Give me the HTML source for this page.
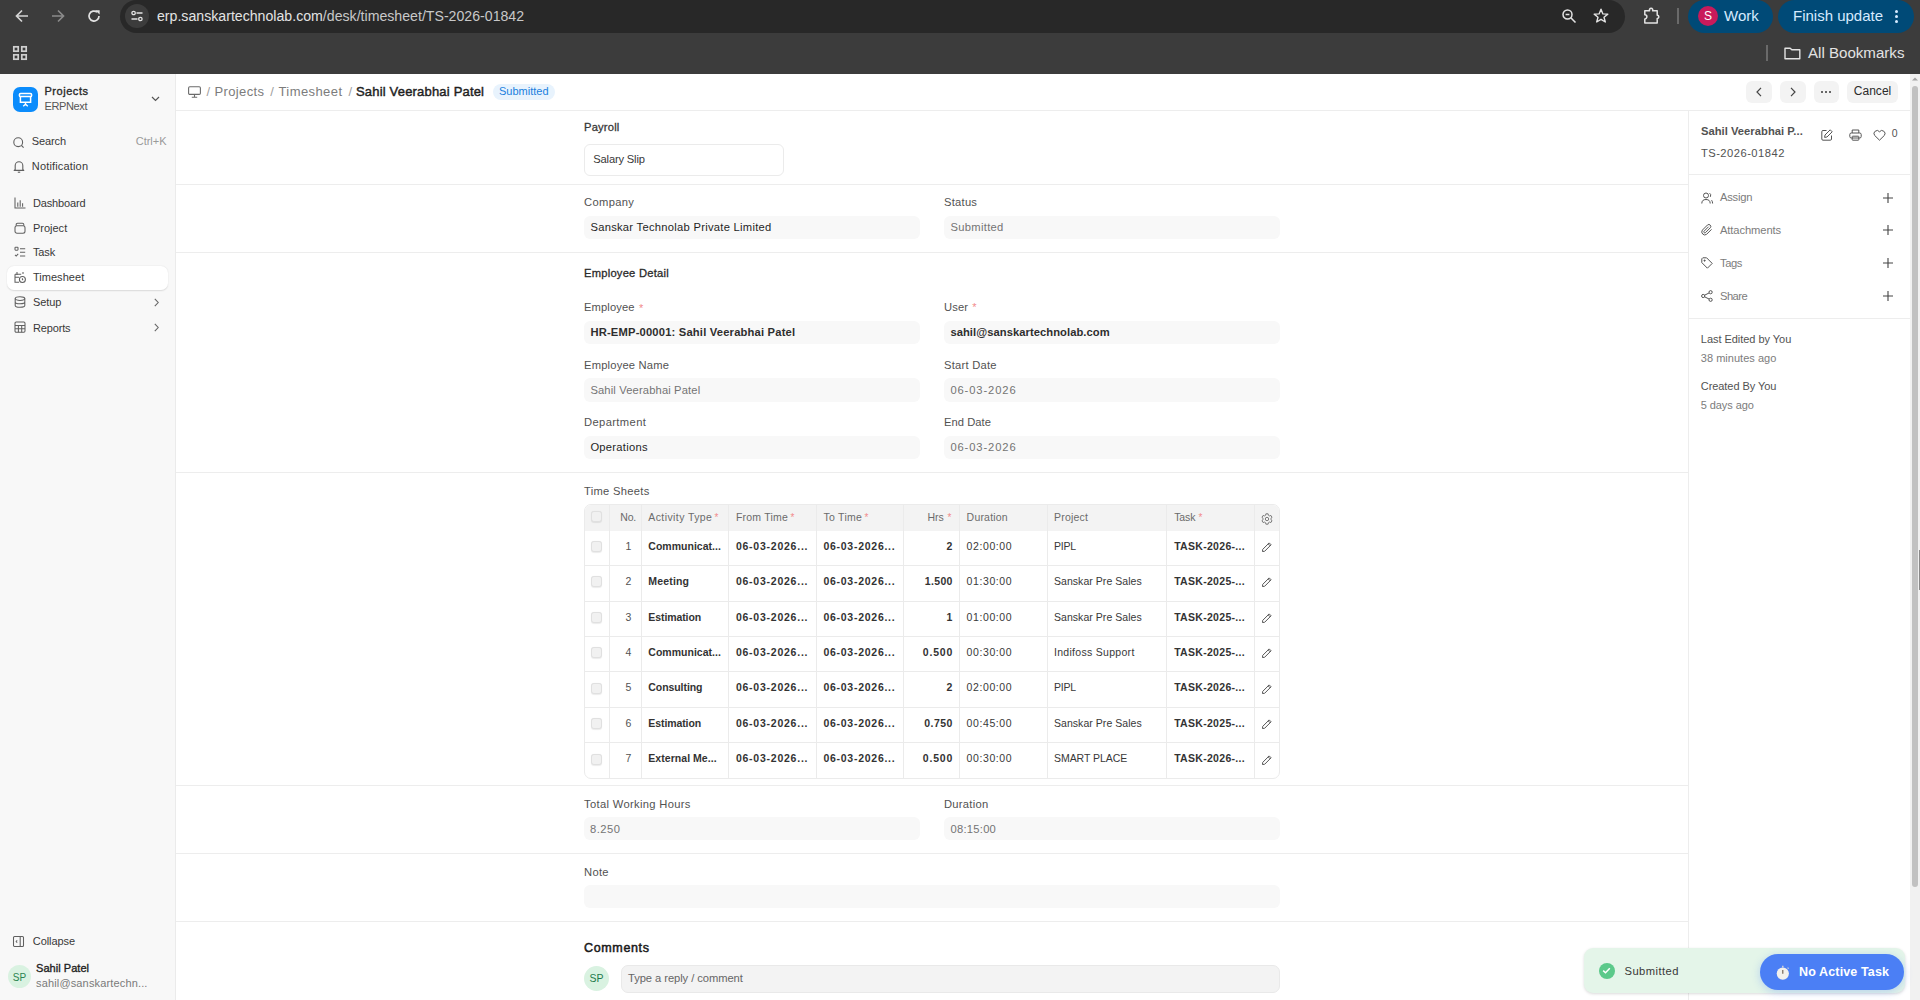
<!DOCTYPE html><html><head><meta charset="utf-8"><style>*{box-sizing:border-box;margin:0;padding:0}
html,body{width:1920px;height:1000px;overflow:hidden;background:#fff;font-family:"Liberation Sans",sans-serif;}
.a{position:absolute;white-space:nowrap}
svg{position:absolute;overflow:visible}
.bx{position:absolute}
#chrome{position:absolute;left:0;top:0;width:1920px;height:74px;background:#3c3c3c}
#omni{position:absolute;left:120px;top:0;width:1505px;height:33px;border-radius:17px;background:#282828}
#sidebar{position:absolute;left:0;top:74px;width:176px;height:926px;background:#f8f8f8;border-right:1px solid #ebebeb}
.hl{position:absolute;height:1px;background:#ededed}
.vl{position:absolute;width:1px;background:#ededed}
.inp{position:absolute;border-radius:6px;background:#f8f8f8}
</style></head><body>
<div id="chrome">
  <div id="omni"></div>
  <!-- back -->
  <svg style="left:15px;top:9px" width="14" height="14" viewBox="0 0 14 14"><path d="M13 7H2M7 1.5L1.5 7L7 12.5" fill="none" stroke="#d4d4d4" stroke-width="1.7"/></svg>
  <svg style="left:51px;top:9px" width="14" height="14" viewBox="0 0 14 14"><path d="M1 7H12M7 1.5L12.5 7L7 12.5" fill="none" stroke="#8a8a8a" stroke-width="1.7"/></svg>
  <svg style="left:87px;top:9px" width="14" height="14" viewBox="0 0 14 14"><path d="M12 7A5 5 0 1 1 10.2 3.2" fill="none" stroke="#e3e3e3" stroke-width="1.7"/><path d="M8.2 1.2H12.6V5.6Z" fill="#e3e3e3"/></svg>
  <div style="position:absolute;left:125px;top:4px;width:24px;height:24px;border-radius:12px;background:#3c3c3c"></div>
  <svg style="left:131px;top:10px" width="12" height="12" viewBox="0 0 12 12"><circle cx="2.6" cy="3" r="1.7" fill="none" stroke="#e3e3e3" stroke-width="1.3"/><path d="M5.5 3H11.5M0.5 9H6.5" stroke="#e3e3e3" stroke-width="1.4"/><circle cx="9.4" cy="9" r="1.7" fill="none" stroke="#e3e3e3" stroke-width="1.3"/></svg>
  <div class="a" style="left:157px;top:7px;font-size:14.15px;line-height:18px;color:#e3e3e3">erp.sanskartechnolab.com<span style="color:#c8c8c8">/desk/timesheet/TS-2026-01842</span></div>
  <!-- zoom -->
  <svg style="left:1562px;top:9px" width="14" height="14" viewBox="0 0 14 14"><circle cx="5.5" cy="5.5" r="4.5" fill="none" stroke="#e3e3e3" stroke-width="1.5"/><path d="M3.6 5.5H7.4" stroke="#e3e3e3" stroke-width="1.5"/><path d="M8.8 8.8L13.5 13.5" stroke="#e3e3e3" stroke-width="1.6"/></svg>
  <svg style="left:1593px;top:8px" width="16" height="15" viewBox="0 0 16 15"><path d="M8 1.2L9.9 5.9L14.8 6.1L11 9.2L12.3 14L8 11.3L3.7 14L5 9.2L1.2 6.1L6.1 5.9Z" fill="none" stroke="#e3e3e3" stroke-width="1.4" stroke-linejoin="round"/></svg>
  <!-- puzzle -->
  <svg style="left:1643px;top:6px" width="18" height="18" viewBox="0 0 18 18"><path d="M1.8 4.8H6.6A1.7 1.7 0 1 1 9.6 4.8H14.2V9.2A1.6 1.6 0 1 1 14.2 12.4V17H1.8V12.9A2.1 2.1 0 0 0 1.8 8.7Z" fill="none" stroke="#e3e3e3" stroke-width="1.5" stroke-linejoin="round"/></svg>
  <div style="position:absolute;left:1677px;top:8px;width:1.5px;height:16px;background:#6a6a6a"></div>
  <div style="position:absolute;left:1688px;top:0;width:85px;height:33px;border-radius:16.5px;background:#004a77"></div>
  <div style="position:absolute;left:1698px;top:6px;width:20px;height:20px;border-radius:10px;background:#c91a5b;color:#fff;font-size:12px;line-height:20px;text-align:center">S</div>
  <div class="a" style="left:1724px;top:6px;font-size:15px;line-height:20px;color:#d6ebff">Work</div>
  <div style="position:absolute;left:1778px;top:0;width:136px;height:33px;border-radius:16.5px;background:#004a77"></div>
  <div class="a" style="left:1793px;top:6px;font-size:15px;line-height:20px;color:#d6ebff">Finish update</div>
  <div style="position:absolute;left:1895px;top:10px;width:3px;height:3px;border-radius:2px;background:#d6ebff"></div>
  <div style="position:absolute;left:1895px;top:15px;width:3px;height:3px;border-radius:2px;background:#d6ebff"></div>
  <div style="position:absolute;left:1895px;top:20px;width:3px;height:3px;border-radius:2px;background:#d6ebff"></div>
  <!-- apps grid -->
  <svg style="left:12px;top:45px" width="16" height="16" viewBox="0 0 16 16"><g fill="none" stroke="#d0d0d0" stroke-width="1.7"><rect x="1.8" y="1.8" width="4.4" height="4.4"/><rect x="9.8" y="1.8" width="4.4" height="4.4"/><rect x="1.8" y="9.8" width="4.4" height="4.4"/><rect x="9.8" y="9.8" width="4.4" height="4.4"/></g></svg>
  <div style="position:absolute;left:1766px;top:45px;width:1.5px;height:16px;background:#6a6a6a"></div>
  <svg style="left:1784px;top:47px" width="17" height="13" viewBox="0 0 17 13"><path d="M1 1.2H6.2L7.8 2.8H15.8V11.8H1Z" fill="none" stroke="#e3e3e3" stroke-width="1.4" stroke-linejoin="round"/></svg>
  <div class="a" style="left:1808px;top:43px;font-size:15.1px;line-height:20px;color:#e3e3e3">All Bookmarks</div>
</div>

<div id="sidebar"></div>
<div class="bx" style="left:13px;top:87px;width:25px;height:25px;border-radius:7px;background:#0b8cfc"></div>
<svg style="left:13px;top:87px" width="25" height="25" viewBox="0 0 25 25"><rect x="6.4" y="6.6" width="12.2" height="3" rx="1.2" fill="none" stroke="#fff" stroke-width="1.5"/><path d="M7.4 9.6V15.2H17.6V9.6" fill="none" stroke="#fff" stroke-width="1.5"/><path d="M12.5 15.5V18.4M10.2 19.2L12.5 17.2L14.8 19.2" fill="none" stroke="#fff" stroke-width="1.4"/></svg>
<div class="a" style="left:44.50px;top:84.19px;font-size:11px;line-height:14px;color:#2b2b2b;letter-spacing:0.538px;-webkit-text-stroke:0.35px #2b2b2b;">Projects</div>
<div class="a" style="left:44.50px;top:99.19px;font-size:11px;line-height:14px;color:#555555;letter-spacing:-0.373px;">ERPNext</div>
<svg style="left:151px;top:96px" width="9" height="6" viewBox="0 0 9 6"><path d="M1 1L4.5 4.5L8 1" fill="none" stroke="#555" stroke-width="1.2"/></svg>
<svg style="left:13px;top:137px" width="12" height="12" viewBox="0 0 12 12"><circle cx="5.2" cy="5.2" r="4.4" fill="none" stroke="#606060" stroke-width="1.1"/><path d="M8.4 8.4L10.6 10.6" stroke="#606060" stroke-width="1.2"/></svg>
<div class="a" style="left:31.80px;top:133.99px;font-size:11px;line-height:14px;color:#383838;letter-spacing:-0.131px;">Search</div>
<div class="a" style="left:135.70px;top:133.99px;font-size:11px;line-height:14px;color:#9a9a9a;">Ctrl+K</div>
<svg style="left:12.5px;top:159.5px" width="12" height="13" viewBox="0 0 12 13"><path d="M2.2 9.5V5.6A3.8 3.8 0 0 1 9.8 5.6V9.5L10.8 10.4H1.2Z" fill="none" stroke="#606060" stroke-width="1.1" stroke-linejoin="round"/><path d="M4.8 12.2H7.2" stroke="#606060" stroke-width="1.1"/></svg>
<div class="a" style="left:31.80px;top:159.19px;font-size:11px;line-height:14px;color:#383838;letter-spacing:0.162px;">Notification</div>
<div class="bx" style="left:7px;top:266px;width:161px;height:24px;border-radius:7px;background:#fff;box-shadow:0 0.5px 1.5px rgba(0,0,0,0.12)"></div>
<div class="a" style="left:32.90px;top:196.39px;font-size:11px;line-height:14px;color:#383838;letter-spacing:-0.139px;">Dashboard</div>
<div class="a" style="left:32.90px;top:221.09px;font-size:11px;line-height:14px;color:#383838;letter-spacing:0.011px;">Project</div>
<div class="a" style="left:32.90px;top:245.29px;font-size:11px;line-height:14px;color:#383838;letter-spacing:-0.106px;">Task</div>
<div class="a" style="left:32.90px;top:270.09px;font-size:11px;line-height:14px;color:#383838;letter-spacing:0.044px;">Timesheet</div>
<div class="a" style="left:32.90px;top:295.49px;font-size:11px;line-height:14px;color:#383838;letter-spacing:-0.062px;">Setup</div>
<div class="a" style="left:32.90px;top:320.59px;font-size:11px;line-height:14px;color:#383838;letter-spacing:-0.136px;">Reports</div>
<svg style="left:13.8px;top:197px" width="12" height="12" viewBox="0 0 12 12" fill="none" stroke="#606060" stroke-width="1.05"><path d="M1 0.5V11H11.5"/><path d="M3.8 9.8V5.5M6.2 9.8V3.2M8.6 9.8V6.2"/></svg>
<svg style="left:13.8px;top:222px" width="12" height="12" viewBox="0 0 12 12" fill="none" stroke="#606060" stroke-width="1.05"><rect x="1" y="3.8" width="10" height="7.4" rx="2"/><path d="M2.2 3.8V2.6Q2.2 1.2 3.6 1.2H8.4Q9.8 1.2 9.8 2.6V3.8"/></svg>
<svg style="left:13.8px;top:246px" width="12" height="12" viewBox="0 0 12 12" fill="none" stroke="#606060" stroke-width="1.05"><rect x="1" y="1.2" width="3" height="3" rx="0.6"/><path d="M6 2.7H11.2M6 6.3H11.2M6 10H11.2M1 8.8L2.2 10L4.2 7.8"/></svg>
<svg style="left:13.8px;top:271px" width="12" height="12" viewBox="0 0 12 12" fill="none" stroke="#606060" stroke-width="1.05"><path d="M1 3.2H7.2M1 3.2V11.2H5M1 6.2H5M3 1V4M9 1V3"/><circle cx="8.4" cy="8.4" r="3"/><path d="M8.4 7.2V8.6L9.2 9.2"/></svg>
<svg style="left:13.8px;top:296px" width="12" height="12" viewBox="0 0 12 12" fill="none" stroke="#606060" stroke-width="1.05"><ellipse cx="6" cy="2.6" rx="4.8" ry="1.8"/><path d="M1.2 2.6V9.4Q1.2 11.2 6 11.2Q10.8 11.2 10.8 9.4V2.6M1.2 6Q1.2 7.8 6 7.8Q10.8 7.8 10.8 6"/></svg>
<svg style="left:13.8px;top:321px" width="12" height="12" viewBox="0 0 12 12" fill="none" stroke="#606060" stroke-width="1.05"><rect x="1" y="1" width="10" height="10.2" rx="1.2"/><path d="M1 4.4H11M1 7.8H11M4.4 4.4V11.2M7.7 4.4V11.2"/></svg>
<svg style="left:154px;top:298px" width="5" height="9" viewBox="0 0 5 9"><path d="M0.8 0.8L4.2 4.5L0.8 8.2" fill="none" stroke="#666" stroke-width="1.1"/></svg>
<svg style="left:154px;top:323px" width="5" height="9" viewBox="0 0 5 9"><path d="M0.8 0.8L4.2 4.5L0.8 8.2" fill="none" stroke="#666" stroke-width="1.1"/></svg>
<svg style="left:13px;top:936px" width="11" height="11" viewBox="0 0 11 11" fill="none" stroke="#606060" stroke-width="1.05"><rect x="0.5" y="0.5" width="10" height="10" rx="1"/><path d="M7.2 0.5V10.5M4.2 4.4L3.2 5.5L4.2 6.6"/></svg>
<div class="a" style="left:32.80px;top:934.19px;font-size:11px;line-height:14px;color:#383838;letter-spacing:-0.072px;">Collapse</div>
<div class="bx" style="left:8px;top:965px;width:23px;height:23px;border-radius:12px;background:#d9f2e1"></div>
<div class="a" style="left:8.00px;top:970.53px;font-size:10px;line-height:13px;color:#2a8550;width:23px;text-align:center;">SP</div>
<div class="a" style="left:36.00px;top:961.19px;font-size:11px;line-height:14px;color:#1f1f1f;letter-spacing:0.041px;-webkit-text-stroke:0.35px #1f1f1f;">Sahil Patel</div>
<div class="a" style="left:36.00px;top:975.69px;font-size:11px;line-height:14px;color:#7a7a7a;letter-spacing:0.151px;">sahil@sanskartechn...</div>
<div class="hl" style="left:176px;top:110px;width:1734px"></div>
<div class="vl" style="left:1688px;top:110px;height:890px"></div>
<div class="hl" style="left:176px;top:184px;width:1512px"></div>
<div class="hl" style="left:176px;top:252px;width:1512px"></div>
<div class="hl" style="left:176px;top:472px;width:1512px"></div>
<div class="hl" style="left:176px;top:785px;width:1512px"></div>
<div class="hl" style="left:176px;top:853px;width:1512px"></div>
<div class="hl" style="left:176px;top:921px;width:1512px"></div>
<div class="hl" style="left:1689px;top:174px;width:221px"></div>
<div class="hl" style="left:1689px;top:318px;width:221px"></div>
<div class="bx" style="left:1910px;top:74px;width:10px;height:926px;background:#f1f1f1"></div>
<div class="bx" style="left:1912px;top:86px;width:6px;height:801px;border-radius:3px;background:#c1c1c1"></div>
<svg style="left:1912px;top:77px" width="6" height="4" viewBox="0 0 6 4"><path d="M0 3.5L3 0.5L6 3.5Z" fill="#a3a3a3"/></svg>
<svg style="left:188px;top:86px" width="13" height="12" viewBox="0 0 13 12" fill="none" stroke="#6b6b6b" stroke-width="1.1"><rect x="0.6" y="0.8" width="11.8" height="7.6" rx="1.2"/><path d="M6.5 8.4V11.2M3.8 11.2H9.2"/></svg>
<div class="a" style="left:206.50px;top:82.90px;font-size:13px;line-height:17px;color:#a0a0a0;">/</div>
<div class="a" style="left:214.50px;top:82.90px;font-size:13px;line-height:17px;color:#7c7c7c;letter-spacing:0.363px;">Projects</div>
<div class="a" style="left:270.30px;top:82.90px;font-size:13px;line-height:17px;color:#a0a0a0;">/</div>
<div class="a" style="left:278.50px;top:82.90px;font-size:13px;line-height:17px;color:#7c7c7c;letter-spacing:0.411px;">Timesheet</div>
<div class="a" style="left:348.50px;top:82.90px;font-size:13px;line-height:17px;color:#a0a0a0;">/</div>
<div class="a" style="left:356.00px;top:82.90px;font-size:13px;line-height:17px;color:#1f1f1f;letter-spacing:0.184px;-webkit-text-stroke:0.45px #1f1f1f;">Sahil Veerabhai Patel</div>
<div class="bx" style="left:493px;top:84px;width:62px;height:16px;border-radius:8px;background:#e8f3fd"></div>
<div class="a" style="left:499.00px;top:84.44px;font-size:11px;line-height:14px;color:#1a80de;">Submitted</div>
<div class="bx" style="left:1746px;top:81px;width:26px;height:22px;border-radius:6px;background:#f3f3f3"></div>
<div class="bx" style="left:1780px;top:81px;width:26px;height:22px;border-radius:6px;background:#f3f3f3"></div>
<div class="bx" style="left:1814px;top:81px;width:25px;height:22px;border-radius:6px;background:#f3f3f3"></div>
<div class="bx" style="left:1847px;top:81px;width:51px;height:22px;border-radius:6px;background:#f3f3f3"></div>
<svg style="left:1756px;top:87px" width="6" height="10" viewBox="0 0 6 10"><path d="M5 0.8L1 5L5 9.2" fill="none" stroke="#444" stroke-width="1.2"/></svg>
<svg style="left:1790px;top:87px" width="6" height="10" viewBox="0 0 6 10"><path d="M1 0.8L5 5L1 9.2" fill="none" stroke="#444" stroke-width="1.2"/></svg>
<div class="bx" style="left:1821.4px;top:91.2px;width:2px;height:2px;border-radius:1px;background:#3a3a3a"></div>
<div class="bx" style="left:1825.4px;top:91.2px;width:2px;height:2px;border-radius:1px;background:#3a3a3a"></div>
<div class="bx" style="left:1829.4px;top:91.2px;width:2px;height:2px;border-radius:1px;background:#3a3a3a"></div>
<div class="a" style="left:1853.75px;top:82.84px;font-size:12px;line-height:16px;color:#2b2b2b;letter-spacing:0.029px;">Cancel</div>
<div class="a" style="left:584.00px;top:119.87px;font-size:11.2px;line-height:15px;color:#383838;letter-spacing:0.194px;-webkit-text-stroke:0.3px #383838;">Payroll</div>
<div class="bx" style="left:584px;top:144px;width:200px;height:32px;border-radius:6px;background:#fff;border:1px solid #ebebeb"></div>
<div class="a" style="left:593.30px;top:152.12px;font-size:11.2px;line-height:15px;color:#383838;letter-spacing:-0.184px;">Salary Slip</div>
<div class="a" style="left:584.00px;top:194.52px;font-size:11.2px;line-height:15px;color:#525252;letter-spacing:0.344px;">Company</div>
<div class="inp" style="left:584px;top:216px;width:336px;height:23px"></div>
<div class="a" style="left:590.40px;top:219.72px;font-size:11.2px;line-height:15px;color:#1f1f1f;letter-spacing:0.277px;">Sanskar Technolab Private Limited</div>
<div class="a" style="left:944.00px;top:194.82px;font-size:11.2px;line-height:15px;color:#525252;letter-spacing:0.250px;">Status</div>
<div class="inp" style="left:944px;top:216px;width:336px;height:23px"></div>
<div class="a" style="left:950.40px;top:219.82px;font-size:11.2px;line-height:15px;color:#747474;letter-spacing:0.321px;">Submitted</div>
<div class="a" style="left:584.00px;top:265.62px;font-size:11.2px;line-height:15px;color:#2b2b2b;letter-spacing:0.228px;-webkit-text-stroke:0.3px #2b2b2b;">Employee Detail</div>
<div class="a" style="left:584.00px;top:300.12px;font-size:11.2px;line-height:15px;color:#525252;letter-spacing:0.113px;">Employee</div>
<div class="a" style="left:638.90px;top:300.69px;font-size:11px;line-height:14px;color:#f28b8b;">*</div>
<div class="inp" style="left:584px;top:321px;width:336px;height:23px"></div>
<div class="a" style="left:590.40px;top:324.62px;font-size:11.2px;line-height:15px;color:#2e2e2e;font-weight:bold;letter-spacing:0.186px;">HR-EMP-00001: Sahil Veerabhai Patel</div>
<div class="a" style="left:584.00px;top:357.92px;font-size:11.2px;line-height:15px;color:#525252;letter-spacing:0.192px;">Employee Name</div>
<div class="inp" style="left:584px;top:378px;width:336px;height:24px"></div>
<div class="a" style="left:590.40px;top:383.22px;font-size:11.2px;line-height:15px;color:#747474;letter-spacing:0.140px;">Sahil Veerabhai Patel</div>
<div class="a" style="left:584.00px;top:415.12px;font-size:11.2px;line-height:15px;color:#525252;letter-spacing:0.376px;">Department</div>
<div class="inp" style="left:584px;top:436px;width:336px;height:23px"></div>
<div class="a" style="left:590.40px;top:440.22px;font-size:11.2px;line-height:15px;color:#1f1f1f;letter-spacing:0.268px;">Operations</div>
<div class="a" style="left:944.00px;top:299.62px;font-size:11.2px;line-height:15px;color:#525252;letter-spacing:0.117px;">User</div>
<div class="a" style="left:972.20px;top:300.19px;font-size:11px;line-height:14px;color:#f28b8b;">*</div>
<div class="inp" style="left:944px;top:321px;width:336px;height:23px"></div>
<div class="a" style="left:950.40px;top:324.82px;font-size:11.2px;line-height:15px;color:#2e2e2e;font-weight:bold;letter-spacing:0.063px;">sahil@sanskartechnolab.com</div>
<div class="a" style="left:944.00px;top:357.82px;font-size:11.2px;line-height:15px;color:#525252;letter-spacing:0.242px;">Start Date</div>
<div class="inp" style="left:944px;top:378px;width:336px;height:24px"></div>
<div class="a" style="left:950.40px;top:383.02px;font-size:11.2px;line-height:15px;color:#747474;letter-spacing:0.890px;">06-03-2026</div>
<div class="a" style="left:944.00px;top:414.62px;font-size:11.2px;line-height:15px;color:#525252;letter-spacing:0.043px;">End Date</div>
<div class="inp" style="left:944px;top:436px;width:336px;height:23px"></div>
<div class="a" style="left:950.40px;top:439.92px;font-size:11.2px;line-height:15px;color:#747474;letter-spacing:0.890px;">06-03-2026</div>
<div class="a" style="left:584.00px;top:483.62px;font-size:11.2px;line-height:15px;color:#525252;letter-spacing:0.295px;">Time Sheets</div>
<div class="bx" style="left:584px;top:504px;width:696px;height:275px;border:1px solid #ebebeb;border-radius:7px;overflow:hidden;background:#fff"><div class="bx" style="left:0;top:0;width:100%;height:26px;background:#f3f3f3"></div></div>
<div class="vl" style="left:609px;top:505px;height:273px;background:#ebebeb"></div>
<div class="vl" style="left:641px;top:505px;height:273px;background:#ebebeb"></div>
<div class="vl" style="left:728px;top:505px;height:273px;background:#ebebeb"></div>
<div class="vl" style="left:816px;top:505px;height:273px;background:#ebebeb"></div>
<div class="vl" style="left:903px;top:505px;height:273px;background:#ebebeb"></div>
<div class="vl" style="left:959px;top:505px;height:273px;background:#ebebeb"></div>
<div class="vl" style="left:1047px;top:505px;height:273px;background:#ebebeb"></div>
<div class="vl" style="left:1166px;top:505px;height:273px;background:#ebebeb"></div>
<div class="vl" style="left:1254px;top:505px;height:273px;background:#ebebeb"></div>
<div class="hl" style="left:585px;top:565px;width:694px;background:#ebebeb"></div>
<div class="hl" style="left:585px;top:601px;width:694px;background:#ebebeb"></div>
<div class="hl" style="left:585px;top:636px;width:694px;background:#ebebeb"></div>
<div class="hl" style="left:585px;top:671px;width:694px;background:#ebebeb"></div>
<div class="hl" style="left:585px;top:707px;width:694px;background:#ebebeb"></div>
<div class="hl" style="left:585px;top:742px;width:694px;background:#ebebeb"></div>
<div class="bx" style="left:591px;top:511px;width:11px;height:11px;border-radius:3px;background:#f1f1f1;box-shadow:inset 0 0 0 1px rgba(0,0,0,0.07),0 0.5px 1px rgba(0,0,0,0.08)"></div>
<div class="a" style="left:620.35px;top:510.16px;font-size:10.5px;line-height:14px;color:#6b6b6b;letter-spacing:-0.220px;">No.</div>
<div class="a" style="left:648.30px;top:510.16px;font-size:10.5px;line-height:14px;color:#6b6b6b;letter-spacing:0.405px;">Activity Type</div>
<div class="a" style="left:714.50px;top:510.83px;font-size:10px;line-height:13px;color:#f28b8b;">*</div>
<div class="a" style="left:735.90px;top:510.16px;font-size:10.5px;line-height:14px;color:#6b6b6b;letter-spacing:0.216px;">From Time</div>
<div class="a" style="left:790.50px;top:510.83px;font-size:10px;line-height:13px;color:#f28b8b;">*</div>
<div class="a" style="left:823.40px;top:510.16px;font-size:10.5px;line-height:14px;color:#6b6b6b;letter-spacing:0.290px;">To Time</div>
<div class="a" style="left:864.50px;top:510.83px;font-size:10px;line-height:13px;color:#f28b8b;">*</div>
<div class="a" style="left:927.40px;top:510.16px;font-size:10.5px;line-height:14px;color:#6b6b6b;letter-spacing:-0.015px;">Hrs</div>
<div class="a" style="left:947.50px;top:510.83px;font-size:10px;line-height:13px;color:#f28b8b;">*</div>
<div class="a" style="left:966.60px;top:510.16px;font-size:10.5px;line-height:14px;color:#6b6b6b;letter-spacing:0.202px;">Duration</div>
<div class="a" style="left:1054.00px;top:510.16px;font-size:10.5px;line-height:14px;color:#6b6b6b;letter-spacing:0.203px;">Project</div>
<div class="a" style="left:1174.20px;top:510.16px;font-size:10.5px;line-height:14px;color:#6b6b6b;letter-spacing:-0.097px;">Task</div>
<div class="a" style="left:1198.50px;top:510.83px;font-size:10px;line-height:13px;color:#f28b8b;">*</div>
<svg style="left:1260.5px;top:512.5px" width="12" height="12" viewBox="0 0 24 24" fill="none" stroke="#747474" stroke-width="1.9" stroke-linejoin="round"><path d="M9.26 4.48 L9.80 1.63 L14.20 1.63 L14.74 4.48 L17.14 5.87 L19.88 4.91 L22.08 8.72 L19.88 10.61 L19.88 13.39 L22.08 15.28 L19.88 19.09 L17.14 18.13 L14.74 19.52 L14.20 22.37 L9.80 22.37 L9.26 19.52 L6.86 18.13 L4.12 19.09 L1.92 15.28 L4.12 13.39 L4.12 10.61 L1.92 8.72 L4.12 4.91 L6.86 5.87Z"/><circle cx="12" cy="12" r="3.4"/></svg>
<div class="bx" style="left:591px;top:541px;width:11px;height:11px;border-radius:3px;background:#f1f1f1;box-shadow:inset 0 0 0 1px rgba(0,0,0,0.07),0 0.5px 1px rgba(0,0,0,0.08)"></div>
<div class="a" style="left:628.40px;top:538.96px;font-size:10.5px;line-height:14px;color:#525252;transform:translateX(-50%);">1</div>
<div class="a" style="left:648.30px;top:538.96px;font-size:10.5px;line-height:14px;color:#333333;font-weight:bold;letter-spacing:0.022px;">Communicat...</div>
<div class="a" style="left:735.90px;top:538.96px;font-size:10.5px;line-height:14px;color:#333333;font-weight:bold;letter-spacing:0.761px;">06-03-2026...</div>
<div class="a" style="left:823.40px;top:538.96px;font-size:10.5px;line-height:14px;color:#333333;font-weight:bold;letter-spacing:0.736px;">06-03-2026...</div>
<div class="a" style="left:946.56px;top:538.96px;font-size:10.5px;line-height:14px;color:#333333;font-weight:bold;">2</div>
<div class="a" style="left:966.60px;top:538.96px;font-size:10.5px;line-height:14px;color:#383838;letter-spacing:0.590px;">02:00:00</div>
<div class="a" style="left:1054.00px;top:538.96px;font-size:10.5px;line-height:14px;color:#383838;letter-spacing:-0.255px;">PIPL</div>
<div class="a" style="left:1174.20px;top:538.96px;font-size:10.5px;line-height:14px;color:#333333;font-weight:bold;letter-spacing:0.299px;">TASK-2026-...</div>
<svg style="left:1262px;top:542.0px" width="10" height="10" viewBox="0 0 10 10" fill="none" stroke="#555" stroke-width="1"><path d="M7.2 0.9L9.1 2.8L2.6 9.3L0.5 9.5L0.7 7.4Z" stroke-linejoin="round"/><path d="M6.2 1.9L8.1 3.8"/></svg>
<div class="bx" style="left:591px;top:576px;width:11px;height:11px;border-radius:3px;background:#f1f1f1;box-shadow:inset 0 0 0 1px rgba(0,0,0,0.07),0 0.5px 1px rgba(0,0,0,0.08)"></div>
<div class="a" style="left:628.40px;top:574.36px;font-size:10.5px;line-height:14px;color:#525252;transform:translateX(-50%);">2</div>
<div class="a" style="left:648.30px;top:574.36px;font-size:10.5px;line-height:14px;color:#333333;font-weight:bold;letter-spacing:0.172px;">Meeting</div>
<div class="a" style="left:735.90px;top:574.36px;font-size:10.5px;line-height:14px;color:#333333;font-weight:bold;letter-spacing:0.761px;">06-03-2026...</div>
<div class="a" style="left:823.40px;top:574.36px;font-size:10.5px;line-height:14px;color:#333333;font-weight:bold;letter-spacing:0.736px;">06-03-2026...</div>
<div class="a" style="left:924.80px;top:574.36px;font-size:10.5px;line-height:14px;color:#333333;font-weight:bold;letter-spacing:0.331px;">1.500</div>
<div class="a" style="left:966.60px;top:574.36px;font-size:10.5px;line-height:14px;color:#383838;letter-spacing:0.590px;">01:30:00</div>
<div class="a" style="left:1054.00px;top:574.36px;font-size:10.5px;line-height:14px;color:#383838;letter-spacing:0.046px;">Sanskar Pre Sales</div>
<div class="a" style="left:1174.20px;top:574.36px;font-size:10.5px;line-height:14px;color:#333333;font-weight:bold;letter-spacing:0.299px;">TASK-2025-...</div>
<svg style="left:1262px;top:577.4px" width="10" height="10" viewBox="0 0 10 10" fill="none" stroke="#555" stroke-width="1"><path d="M7.2 0.9L9.1 2.8L2.6 9.3L0.5 9.5L0.7 7.4Z" stroke-linejoin="round"/><path d="M6.2 1.9L8.1 3.8"/></svg>
<div class="bx" style="left:591px;top:612px;width:11px;height:11px;border-radius:3px;background:#f1f1f1;box-shadow:inset 0 0 0 1px rgba(0,0,0,0.07),0 0.5px 1px rgba(0,0,0,0.08)"></div>
<div class="a" style="left:628.40px;top:610.26px;font-size:10.5px;line-height:14px;color:#525252;transform:translateX(-50%);">3</div>
<div class="a" style="left:648.30px;top:610.26px;font-size:10.5px;line-height:14px;color:#333333;font-weight:bold;letter-spacing:-0.086px;">Estimation</div>
<div class="a" style="left:735.90px;top:610.26px;font-size:10.5px;line-height:14px;color:#333333;font-weight:bold;letter-spacing:0.761px;">06-03-2026...</div>
<div class="a" style="left:823.40px;top:610.26px;font-size:10.5px;line-height:14px;color:#333333;font-weight:bold;letter-spacing:0.736px;">06-03-2026...</div>
<div class="a" style="left:946.56px;top:610.26px;font-size:10.5px;line-height:14px;color:#333333;font-weight:bold;">1</div>
<div class="a" style="left:966.60px;top:610.26px;font-size:10.5px;line-height:14px;color:#383838;letter-spacing:0.590px;">01:00:00</div>
<div class="a" style="left:1054.00px;top:610.26px;font-size:10.5px;line-height:14px;color:#383838;letter-spacing:0.046px;">Sanskar Pre Sales</div>
<div class="a" style="left:1174.20px;top:610.26px;font-size:10.5px;line-height:14px;color:#333333;font-weight:bold;letter-spacing:0.299px;">TASK-2025-...</div>
<svg style="left:1262px;top:612.9px" width="10" height="10" viewBox="0 0 10 10" fill="none" stroke="#555" stroke-width="1"><path d="M7.2 0.9L9.1 2.8L2.6 9.3L0.5 9.5L0.7 7.4Z" stroke-linejoin="round"/><path d="M6.2 1.9L8.1 3.8"/></svg>
<div class="bx" style="left:591px;top:647px;width:11px;height:11px;border-radius:3px;background:#f1f1f1;box-shadow:inset 0 0 0 1px rgba(0,0,0,0.07),0 0.5px 1px rgba(0,0,0,0.08)"></div>
<div class="a" style="left:628.40px;top:645.26px;font-size:10.5px;line-height:14px;color:#525252;transform:translateX(-50%);">4</div>
<div class="a" style="left:648.30px;top:645.26px;font-size:10.5px;line-height:14px;color:#333333;font-weight:bold;letter-spacing:0.022px;">Communicat...</div>
<div class="a" style="left:735.90px;top:645.26px;font-size:10.5px;line-height:14px;color:#333333;font-weight:bold;letter-spacing:0.761px;">06-03-2026...</div>
<div class="a" style="left:823.40px;top:645.26px;font-size:10.5px;line-height:14px;color:#333333;font-weight:bold;letter-spacing:0.736px;">06-03-2026...</div>
<div class="a" style="left:922.70px;top:645.26px;font-size:10.5px;line-height:14px;color:#333333;font-weight:bold;letter-spacing:0.856px;">0.500</div>
<div class="a" style="left:966.60px;top:645.26px;font-size:10.5px;line-height:14px;color:#383838;letter-spacing:0.590px;">00:30:00</div>
<div class="a" style="left:1054.00px;top:645.26px;font-size:10.5px;line-height:14px;color:#383838;letter-spacing:0.295px;">Indifoss Support</div>
<div class="a" style="left:1174.20px;top:645.26px;font-size:10.5px;line-height:14px;color:#333333;font-weight:bold;letter-spacing:0.299px;">TASK-2025-...</div>
<svg style="left:1262px;top:648.3px" width="10" height="10" viewBox="0 0 10 10" fill="none" stroke="#555" stroke-width="1"><path d="M7.2 0.9L9.1 2.8L2.6 9.3L0.5 9.5L0.7 7.4Z" stroke-linejoin="round"/><path d="M6.2 1.9L8.1 3.8"/></svg>
<div class="bx" style="left:591px;top:683px;width:11px;height:11px;border-radius:3px;background:#f1f1f1;box-shadow:inset 0 0 0 1px rgba(0,0,0,0.07),0 0.5px 1px rgba(0,0,0,0.08)"></div>
<div class="a" style="left:628.40px;top:680.26px;font-size:10.5px;line-height:14px;color:#525252;transform:translateX(-50%);">5</div>
<div class="a" style="left:648.30px;top:680.26px;font-size:10.5px;line-height:14px;color:#333333;font-weight:bold;letter-spacing:-0.069px;">Consulting</div>
<div class="a" style="left:735.90px;top:680.26px;font-size:10.5px;line-height:14px;color:#333333;font-weight:bold;letter-spacing:0.761px;">06-03-2026...</div>
<div class="a" style="left:823.40px;top:680.26px;font-size:10.5px;line-height:14px;color:#333333;font-weight:bold;letter-spacing:0.736px;">06-03-2026...</div>
<div class="a" style="left:946.56px;top:680.26px;font-size:10.5px;line-height:14px;color:#333333;font-weight:bold;">2</div>
<div class="a" style="left:966.60px;top:680.26px;font-size:10.5px;line-height:14px;color:#383838;letter-spacing:0.590px;">02:00:00</div>
<div class="a" style="left:1054.00px;top:680.26px;font-size:10.5px;line-height:14px;color:#383838;letter-spacing:-0.255px;">PIPL</div>
<div class="a" style="left:1174.20px;top:680.26px;font-size:10.5px;line-height:14px;color:#333333;font-weight:bold;letter-spacing:0.299px;">TASK-2026-...</div>
<svg style="left:1262px;top:683.7px" width="10" height="10" viewBox="0 0 10 10" fill="none" stroke="#555" stroke-width="1"><path d="M7.2 0.9L9.1 2.8L2.6 9.3L0.5 9.5L0.7 7.4Z" stroke-linejoin="round"/><path d="M6.2 1.9L8.1 3.8"/></svg>
<div class="bx" style="left:591px;top:718px;width:11px;height:11px;border-radius:3px;background:#f1f1f1;box-shadow:inset 0 0 0 1px rgba(0,0,0,0.07),0 0.5px 1px rgba(0,0,0,0.08)"></div>
<div class="a" style="left:628.40px;top:716.26px;font-size:10.5px;line-height:14px;color:#525252;transform:translateX(-50%);">6</div>
<div class="a" style="left:648.30px;top:716.26px;font-size:10.5px;line-height:14px;color:#333333;font-weight:bold;letter-spacing:-0.086px;">Estimation</div>
<div class="a" style="left:735.90px;top:716.26px;font-size:10.5px;line-height:14px;color:#333333;font-weight:bold;letter-spacing:0.761px;">06-03-2026...</div>
<div class="a" style="left:823.40px;top:716.26px;font-size:10.5px;line-height:14px;color:#333333;font-weight:bold;letter-spacing:0.736px;">06-03-2026...</div>
<div class="a" style="left:924.20px;top:716.26px;font-size:10.5px;line-height:14px;color:#333333;font-weight:bold;letter-spacing:0.481px;">0.750</div>
<div class="a" style="left:966.60px;top:716.26px;font-size:10.5px;line-height:14px;color:#383838;letter-spacing:0.590px;">00:45:00</div>
<div class="a" style="left:1054.00px;top:716.26px;font-size:10.5px;line-height:14px;color:#383838;letter-spacing:0.046px;">Sanskar Pre Sales</div>
<div class="a" style="left:1174.20px;top:716.26px;font-size:10.5px;line-height:14px;color:#333333;font-weight:bold;letter-spacing:0.299px;">TASK-2025-...</div>
<svg style="left:1262px;top:719.1px" width="10" height="10" viewBox="0 0 10 10" fill="none" stroke="#555" stroke-width="1"><path d="M7.2 0.9L9.1 2.8L2.6 9.3L0.5 9.5L0.7 7.4Z" stroke-linejoin="round"/><path d="M6.2 1.9L8.1 3.8"/></svg>
<div class="bx" style="left:591px;top:754px;width:11px;height:11px;border-radius:3px;background:#f1f1f1;box-shadow:inset 0 0 0 1px rgba(0,0,0,0.07),0 0.5px 1px rgba(0,0,0,0.08)"></div>
<div class="a" style="left:628.40px;top:751.46px;font-size:10.5px;line-height:14px;color:#525252;transform:translateX(-50%);">7</div>
<div class="a" style="left:648.30px;top:751.46px;font-size:10.5px;line-height:14px;color:#333333;font-weight:bold;letter-spacing:0.047px;">External Me...</div>
<div class="a" style="left:735.90px;top:751.46px;font-size:10.5px;line-height:14px;color:#333333;font-weight:bold;letter-spacing:0.761px;">06-03-2026...</div>
<div class="a" style="left:823.40px;top:751.46px;font-size:10.5px;line-height:14px;color:#333333;font-weight:bold;letter-spacing:0.736px;">06-03-2026...</div>
<div class="a" style="left:922.70px;top:751.46px;font-size:10.5px;line-height:14px;color:#333333;font-weight:bold;letter-spacing:0.856px;">0.500</div>
<div class="a" style="left:966.60px;top:751.46px;font-size:10.5px;line-height:14px;color:#383838;letter-spacing:0.590px;">00:30:00</div>
<div class="a" style="left:1054.00px;top:751.46px;font-size:10.5px;line-height:14px;color:#383838;letter-spacing:-0.052px;">SMART PLACE</div>
<div class="a" style="left:1174.20px;top:751.46px;font-size:10.5px;line-height:14px;color:#333333;font-weight:bold;letter-spacing:0.299px;">TASK-2026-...</div>
<svg style="left:1262px;top:754.6px" width="10" height="10" viewBox="0 0 10 10" fill="none" stroke="#555" stroke-width="1"><path d="M7.2 0.9L9.1 2.8L2.6 9.3L0.5 9.5L0.7 7.4Z" stroke-linejoin="round"/><path d="M6.2 1.9L8.1 3.8"/></svg>
<div class="a" style="left:584.00px;top:797.12px;font-size:11.2px;line-height:15px;color:#525252;letter-spacing:0.326px;">Total Working Hours</div>
<div class="inp" style="left:584px;top:817px;width:336px;height:23px"></div>
<div class="a" style="left:590.10px;top:821.62px;font-size:11.2px;line-height:15px;color:#747474;letter-spacing:0.468px;">8.250</div>
<div class="a" style="left:944.00px;top:797.12px;font-size:11.2px;line-height:15px;color:#525252;letter-spacing:0.266px;">Duration</div>
<div class="inp" style="left:944px;top:817px;width:336px;height:23px"></div>
<div class="a" style="left:950.40px;top:821.62px;font-size:11.2px;line-height:15px;color:#747474;letter-spacing:0.272px;">08:15:00</div>
<div class="a" style="left:584.00px;top:864.62px;font-size:11.2px;line-height:15px;color:#525252;letter-spacing:0.314px;">Note</div>
<div class="inp" style="left:584px;top:885px;width:696px;height:23px"></div>
<div class="a" style="left:584.00px;top:939.67px;font-size:12.5px;line-height:16px;color:#1a1a1a;letter-spacing:0.652px;-webkit-text-stroke:0.5px #1a1a1a;">Comments</div>
<div class="bx" style="left:584px;top:966px;width:25px;height:25px;border-radius:13px;background:#d9f2e1"></div>
<div class="a" style="left:584.00px;top:970.76px;font-size:10.5px;line-height:14px;color:#1f7a4c;width:25px;text-align:center;">SP</div>
<div class="bx" style="left:621px;top:965px;width:659px;height:28px;border-radius:7px;background:#f3f3f3;border:1px solid #e9e9e9"></div>
<div class="a" style="left:628.00px;top:970.62px;font-size:11.2px;line-height:15px;color:#666666;letter-spacing:-0.067px;">Type a reply / comment</div>
<div class="a" style="left:1700.90px;top:123.62px;font-size:11.2px;line-height:15px;color:#525252;font-weight:bold;letter-spacing:0.038px;">Sahil Veerabhai P...</div>
<div class="a" style="left:1700.90px;top:146.22px;font-size:11.2px;line-height:15px;color:#525252;letter-spacing:0.480px;">TS-2026-01842</div>
<svg style="left:1821px;top:128.5px" width="12" height="12" viewBox="0 0 12 12" fill="none" stroke="#555" stroke-width="1"><path d="M5.5 1.5H2Q0.8 1.5 0.8 2.7V10Q0.8 11.2 2 11.2H9.3Q10.5 11.2 10.5 10V6.5"/><path d="M9.2 0.8L11.2 2.8L6 8L3.6 8.4L4 6Z" stroke-linejoin="round"/></svg>
<svg style="left:1849px;top:128.5px" width="13" height="12" viewBox="0 0 13 12" fill="none" stroke="#555" stroke-width="1"><path d="M3.2 4V1H9.8V4"/><rect x="0.8" y="4" width="11.4" height="5" rx="1.5"/><rect x="3.2" y="7.2" width="6.6" height="4" rx="0.5"/></svg>
<svg style="left:1873px;top:129.5px" width="13" height="11" viewBox="0 0 13 11" fill="none" stroke="#555" stroke-width="1"><path d="M6.5 10.2L1.6 5.4A2.8 2.8 0 0 1 6.5 1.8A2.8 2.8 0 0 1 11.4 5.4Z" stroke-linejoin="round"/></svg>
<div class="a" style="left:1891.70px;top:125.86px;font-size:10.5px;line-height:14px;color:#525252;">0</div>
<svg style="left:1701px;top:191.5px" width="12" height="12" viewBox="0 0 12 12" fill="none" stroke="#555" stroke-width="1"><circle cx="5" cy="3.5" r="2.5"/><path d="M0.8 11.5Q0.8 7.5 5 7.5Q9.2 7.5 9.2 11.5M8.6 1.2Q10.4 2.2 9.4 4.8M10.6 8.2Q11.6 9.4 11.6 11.5"/></svg>
<div class="a" style="left:1720.00px;top:190.02px;font-size:11.2px;line-height:15px;color:#7c7c7c;letter-spacing:-0.223px;">Assign</div>
<svg style="left:1882.5px;top:192.5px" width="10" height="10" viewBox="0 0 10 10" stroke="#444" stroke-width="1.1"><path d="M5 0V10M0 5H10"/></svg>
<svg style="left:1701px;top:224.4px" width="12" height="12" viewBox="0 0 12 12" fill="none" stroke="#555" stroke-width="1"><path d="M10.5 5.4L5.6 10.3A3 3 0 0 1 1.4 6.1L6.6 0.9A2 2 0 0 1 9.4 3.7L4.4 8.7A1 1 0 0 1 3 7.3L7.6 2.7"/></svg>
<div class="a" style="left:1720.00px;top:222.92px;font-size:11.2px;line-height:15px;color:#7c7c7c;letter-spacing:-0.105px;">Attachments</div>
<svg style="left:1882.5px;top:225.4px" width="10" height="10" viewBox="0 0 10 10" stroke="#444" stroke-width="1.1"><path d="M5 0V10M0 5H10"/></svg>
<svg style="left:1701px;top:257.3px" width="12" height="12" viewBox="0 0 12 12" fill="none" stroke="#555" stroke-width="1"><path d="M0.8 1.8V5.6L6.4 11.2L11.2 6.4L5.6 0.8H1.8Z" stroke-linejoin="round"/><circle cx="3.6" cy="3.6" r="0.6" fill="#555"/></svg>
<div class="a" style="left:1720.00px;top:255.82px;font-size:11.2px;line-height:15px;color:#7c7c7c;letter-spacing:-0.419px;">Tags</div>
<svg style="left:1882.5px;top:258.3px" width="10" height="10" viewBox="0 0 10 10" stroke="#444" stroke-width="1.1"><path d="M5 0V10M0 5H10"/></svg>
<svg style="left:1701px;top:290.0px" width="12" height="12" viewBox="0 0 12 12" fill="none" stroke="#555" stroke-width="1"><circle cx="9.6" cy="2.2" r="1.6"/><circle cx="2.2" cy="6" r="1.6"/><circle cx="9.6" cy="9.8" r="1.6"/><path d="M3.6 5.2L8.2 2.9M3.6 6.8L8.2 9.1"/></svg>
<div class="a" style="left:1720.00px;top:288.52px;font-size:11.2px;line-height:15px;color:#7c7c7c;letter-spacing:-0.547px;">Share</div>
<svg style="left:1882.5px;top:291.0px" width="10" height="10" viewBox="0 0 10 10" stroke="#444" stroke-width="1.1"><path d="M5 0V10M0 5H10"/></svg>
<div class="a" style="left:1700.80px;top:332.19px;font-size:11px;line-height:14px;color:#525252;letter-spacing:-0.037px;">Last Edited by You</div>
<div class="a" style="left:1700.80px;top:351.09px;font-size:11px;line-height:14px;color:#7c7c7c;letter-spacing:0.022px;">38 minutes ago</div>
<div class="a" style="left:1700.80px;top:378.99px;font-size:11px;line-height:14px;color:#525252;letter-spacing:-0.073px;">Created By You</div>
<div class="a" style="left:1700.80px;top:397.89px;font-size:11px;line-height:14px;color:#7c7c7c;letter-spacing:-0.091px;">5 days ago</div>
<div class="bx" style="left:1584px;top:948px;width:321px;height:45px;border-radius:9px;background:#e4f5e9;box-shadow:0 1px 3px rgba(0,0,0,0.15)"></div>
<div class="bx" style="left:1598.5px;top:962.5px;width:16px;height:16px;border-radius:8px;background:#5bc98a"></div>
<svg style="left:1602px;top:966px" width="9" height="9" viewBox="0 0 9 9"><path d="M1.2 4.6L3.5 6.8L7.8 2.2" fill="none" stroke="#fff" stroke-width="1.5"/></svg>
<div class="a" style="left:1624.50px;top:963.62px;font-size:11.2px;line-height:15px;color:#383838;letter-spacing:0.446px;">Submitted</div>
<div class="bx" style="left:1760px;top:954px;width:144px;height:36px;border-radius:18px;background:#4b7ff5;box-shadow:0 2px 8px rgba(75,127,245,0.3)"></div>
<svg style="left:1776px;top:965px" width="14" height="15" viewBox="0 0 14 15"><circle cx="6.8" cy="8.6" r="6.1" fill="#f3f1ec"/><path d="M6.8 0.8V2.6" stroke="#d8d8d8" stroke-width="1.4"/><path d="M6.8 5V8.8" stroke="#6b5a4a" stroke-width="1.1"/><path d="M11.6 2.6L12.6 3.6" stroke="#d8d8d8" stroke-width="1.2"/></svg>
<div class="a" style="left:1799.00px;top:964.17px;font-size:12.5px;line-height:16px;color:#ffffff;font-weight:bold;letter-spacing:0.136px;">No Active Task</div>
<div class="bx" style="left:1919px;top:550px;width:1px;height:40px;background:#8a8a8a"></div>
</body></html>
